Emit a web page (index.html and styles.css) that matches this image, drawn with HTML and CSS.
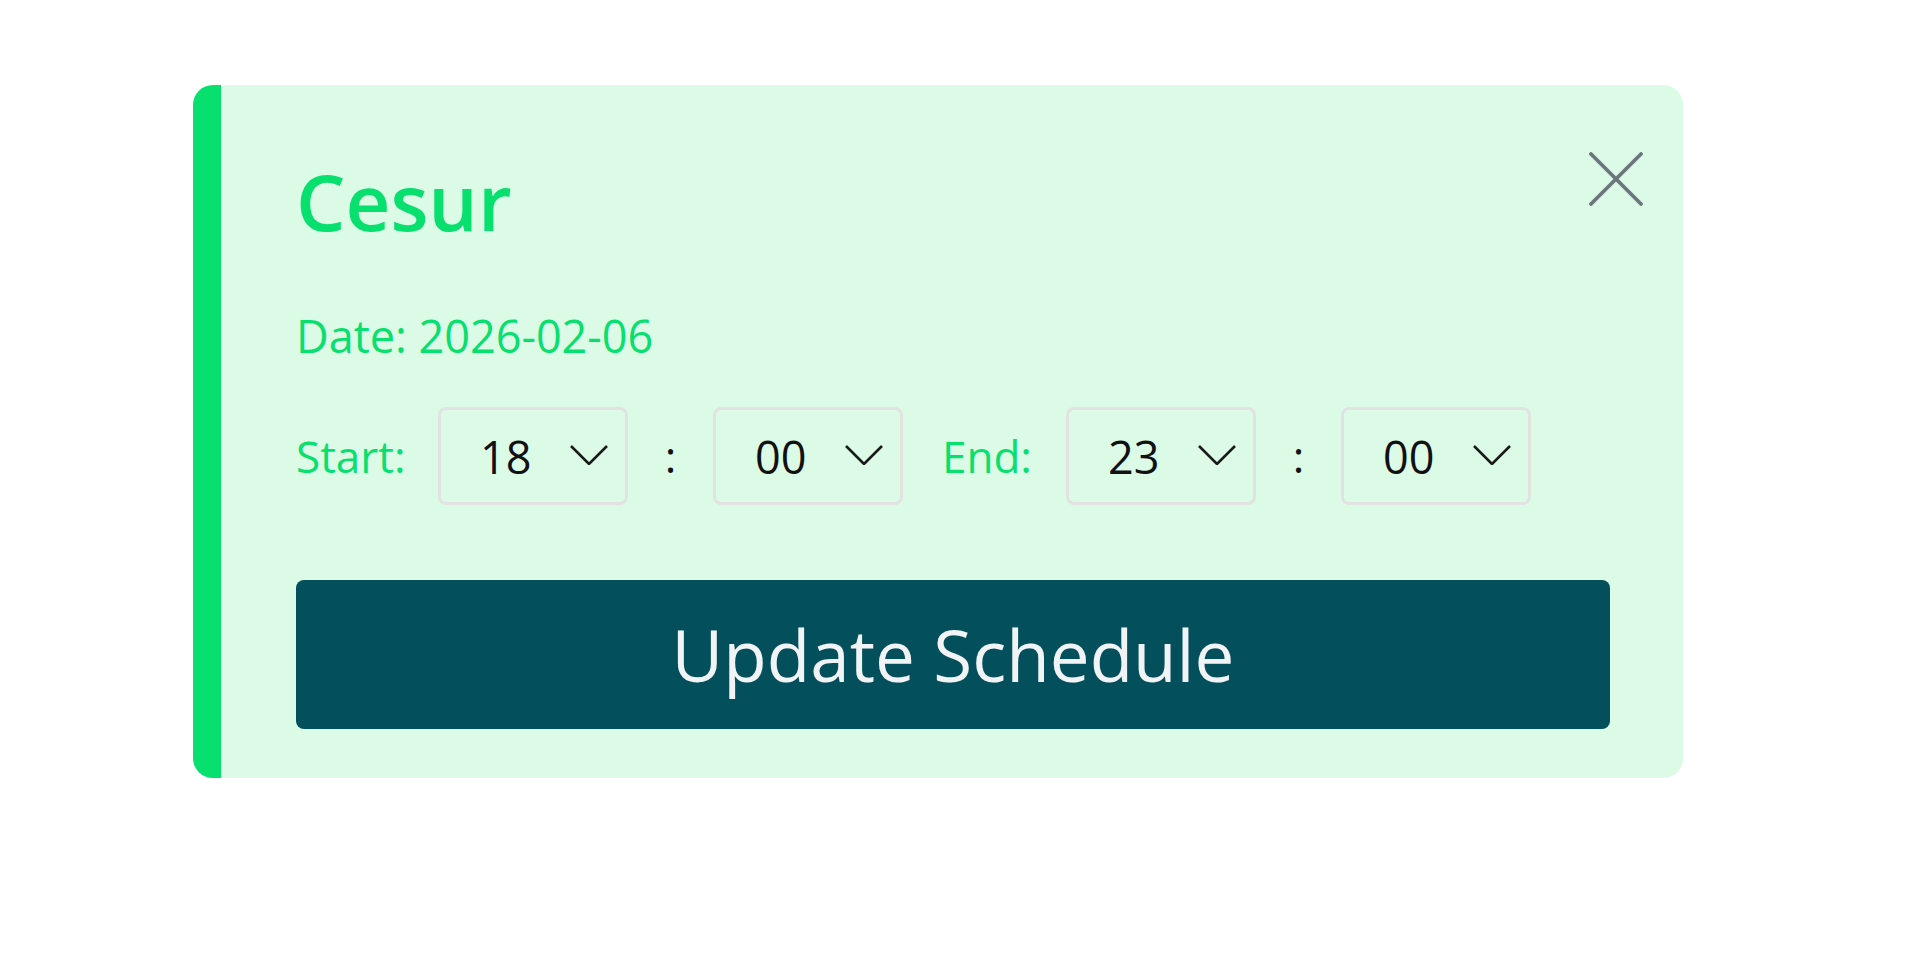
FILE: index.html
```html
<!DOCTYPE html>
<html lang="en">

<head>
    <meta charset="UTF-8">
    <meta name="viewport" content="width=device-width, initial-scale=1.0">
    <title>Schedule</title>
    <link rel="stylesheet" href="styles.css">
</head>

<body>

    <div class="page">

        <div class="card">

            <button class="close" aria-label="Close">
                <svg width="54" height="54" viewBox="0 0 54 54">
                    <line x1="2" y1="2" x2="52" y2="52" />
                    <line x1="52" y1="2" x2="2" y2="52" />
                </svg>
            </button>

            <h1 class="name">Cesur</h1>

            <p class="date">Date: 2026-02-06</p>

            <div class="time-row">
                <label class="time-label start">Start:</label>
                <div class="select-wrap">
                    <select>
                        <option>17</option>
                        <option selected>18</option>
                        <option>19</option>
                    </select>
                    <svg class="chevron" width="38" height="20" viewBox="0 0 38 20">
                        <polyline points="1,1 19,19 37,1" />
                    </svg>
                </div>
                <span class="sep">:</span>
                <div class="select-wrap">
                    <select>
                        <option selected>00</option>
                        <option>15</option>
                        <option>30</option>
                        <option>45</option>
                    </select>
                    <svg class="chevron" width="38" height="20" viewBox="0 0 38 20">
                        <polyline points="1,1 19,19 37,1" />
                    </svg>
                </div>
                <label class="time-label end">End:</label>
                <div class="select-wrap">
                    <select>
                        <option>22</option>
                        <option selected>23</option>
                    </select>
                    <svg class="chevron" width="38" height="20" viewBox="0 0 38 20">
                        <polyline points="1,1 19,19 37,1" />
                    </svg>
                </div>
                <span class="sep">:</span>
                <div class="select-wrap">
                    <select>
                        <option selected>00</option>
                        <option>15</option>
                        <option>30</option>
                        <option>45</option>
                    </select>
                    <svg class="chevron" width="38" height="20" viewBox="0 0 38 20">
                        <polyline points="1,1 19,19 37,1" />
                    </svg>
                </div>
            </div>

            <button class="update">Update Schedule</button>

        </div>

    </div>

</body>

</html>
```

FILE: styles.css
```css
* {
    margin: 0px;
    box-sizing: border-box;
}

body {
    font-family: 'Open Sans', 'Noto Sans', sans-serif;
    background-color: white;
    color: #111;
}

.page {
    padding: 85px 0 0 193px;
}

.card {
    position: relative;
    width: 1490px;
    background-color: #dbfbe7;
    border-left: 28px solid #07df6e;
    border-radius: 20px;
    padding: 77px 73px 49px 75px;
    color: #07df6e;
}

.close {
    position: absolute;
    top: 67px;
    right: 40px;
    width: 54px;
    height: 54px;
    padding: 0;
    border: none;
    background: none;
    cursor: pointer;
}

.close svg {
    display: block;
    stroke: #6c747e;
    stroke-width: 3.8;
    stroke-linecap: round;
}

.name {
    font-size: 78px;
    font-weight: 600;
    line-height: 1;
    color: #07df6e;
}

.date {
    margin-top: 73px;
    font-size: 45px;
    line-height: 1;
}

.time-row {
    display: flex;
    align-items: center;
    margin-top: 49px;
    font-size: 44px;
    line-height: 1;
}

.time-label.start {
    width: 142px;
}

.time-label.end {
    width: 124px;
    margin-left: 39px;
}

.sep {
    width: 85px;
    text-align: center;
    color: #111;
}

.select-wrap {
    position: relative;
    width: 190px;
    height: 98px;
}

.select-wrap select {
    -webkit-appearance: none;
    appearance: none;
    width: 100%;
    height: 100%;
    padding: 0 0 0 39px;
    border: 3px solid #e2e2e2;
    border-radius: 8px;
    background: transparent;
    font-family: inherit;
    font-size: 45px;
    color: #111;
    outline: none;
}

.chevron {
    position: absolute;
    top: 38px;
    right: 20px;
    pointer-events: none;
    fill: none;
    stroke: #1a1a1a;
    stroke-width: 2.6;
}

.update {
    display: block;
    width: 100%;
    height: 149px;
    margin-top: 75px;
    border: none;
    border-radius: 8px;
    background-color: #034f5c;
    color: #f1f3f5;
    font-family: inherit;
    font-size: 71px;
    line-height: 1;
    cursor: pointer;
}
```
